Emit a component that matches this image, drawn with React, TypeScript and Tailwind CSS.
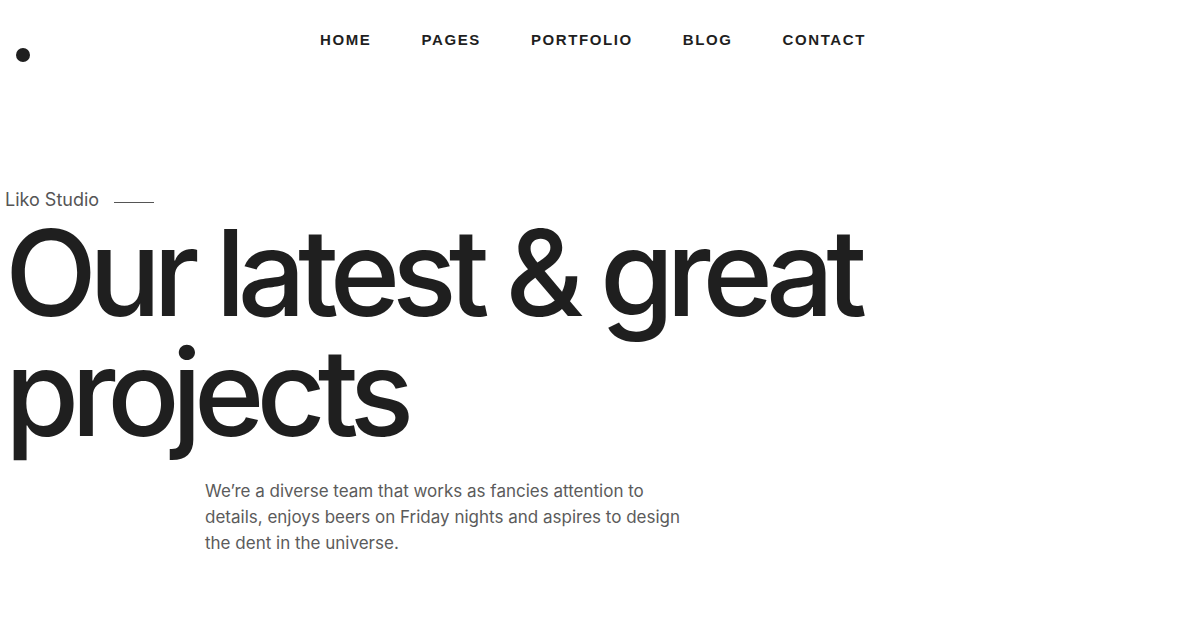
import React from "react";

const navLinks = ["HOME", "PAGES", "PORTFOLIO", "BLOG", "CONTACT"];

export default function App() {
  return (
    <div className="min-h-screen bg-white font-['Inter',sans-serif] text-[#1f1f1f]">
      {/* Header */}
      <header className="relative h-[82px]">
        <span className="absolute left-[16px] top-[48px] h-[14px] w-[14px] rounded-full bg-[#1f1f1f]" />
        <nav className="flex justify-center gap-[50px] pt-[31px] pl-[8px]">
          {navLinks.map((link) => (
            <a
              key={link}
              href="#"
              className="font-['Liberation_Sans',sans-serif] text-[15px] font-bold leading-[18px] tracking-[1.6px] text-[#1f1f1f]"
            >
              {link}
            </a>
          ))}
        </nav>
      </header>

      {/* Hero */}
      <section className="pt-[106px] pl-[5px]">
        <div className="flex items-center gap-[15px]">
          <span className="text-[18px] leading-[24px] text-[#555]">Liko Studio</span>
          <span className="mt-[4px] h-px w-[40px] bg-[#555]" />
        </div>
        <h1 className="mt-[1px] text-[120px] font-medium leading-[120px] tracking-[-8px]">
          Our latest &amp; great
          <br />
          projects
        </h1>
        <p className="mt-[25px] ml-[200px] max-w-[488px] text-[17px] leading-[26px] text-[#5b5b5b]">
          We’re a diverse team that works as fancies attention to details,
          enjoys beers on Friday nights and aspires to design the dent in the
          universe.
        </p>
      </section>
    </div>
  );
}
